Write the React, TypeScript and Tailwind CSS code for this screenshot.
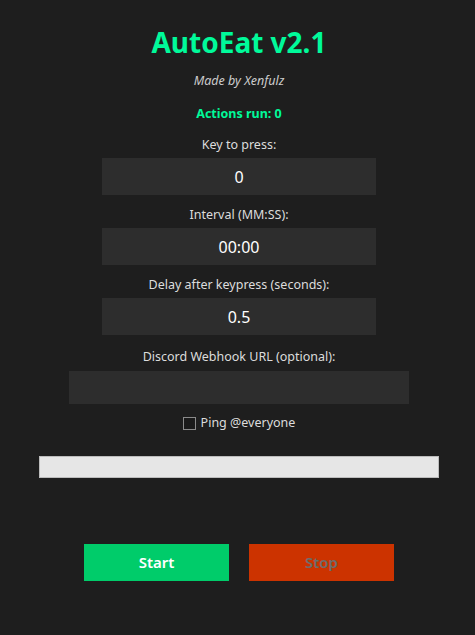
import { useState } from "react";

const fields = [
  { label: "Key to press:", value: "0" },
  { label: "Interval (MM:SS):", value: "00:00" },
  { label: "Delay after keypress (seconds):", value: "0.5" },
];

export default function App() {
  const [values, setValues] = useState(fields.map((f) => f.value));
  const [webhook, setWebhook] = useState("");
  const [ping, setPing] = useState(false);
  const [actions] = useState(0);

  return (
    <div
      className="min-h-screen w-full bg-[#1e1e1e] text-[#dcdcdc] flex flex-col items-center pl-[3px] pt-[24px]"
      style={{ fontFamily: '"Segoe UI", "Noto Sans", sans-serif' }}
    >
      <h1 className="text-[28px] leading-[36px] font-bold text-[#00fa9a]">
        AutoEat v2.1
      </h1>
      <p className="mt-[13px] text-[12.5px] leading-[16px] italic text-[#cccccc]">
        Made by Xenfulz
      </p>
      <p className="mt-[17px] text-[12.5px] leading-[16px] font-bold text-[#00fa9a]">
        Actions run: {actions}
      </p>

      <div className="mt-[3px] flex flex-col items-center">
        {fields.map((field, i) => (
          <div key={field.label} className="flex flex-col items-center mt-3">
            <label className="text-[12.5px] leading-[16px] mb-[5px]">
              {field.label}
            </label>
            <input
              value={values[i]}
              onChange={(e) =>
                setValues((prev) =>
                  prev.map((v, j) => (j === i ? e.target.value : v))
                )
              }
              className="w-[274px] h-[37px] bg-[#2d2d2d] text-white text-center text-[16px] outline-none"
            />
          </div>
        ))}
      </div>

      <label className="mt-[14px] text-[12.5px] leading-[16px] mb-[6px]">
        Discord Webhook URL (optional):
      </label>
      <input
        value={webhook}
        onChange={(e) => setWebhook(e.target.value)}
        className="w-[340px] h-[33px] bg-[#2d2d2d] text-white text-[13px] px-2 outline-none"
      />

      <label className="mt-[11px] flex items-center gap-[5px] text-[12.5px] leading-[16px] cursor-pointer">
        <span
          onClick={() => setPing(!ping)}
          className="w-[13px] h-[13px] border border-[#8a8a8a] bg-[#1a1a1a] flex items-center justify-center"
        >
          {ping && <span className="w-[7px] h-[7px] bg-[#00fa9a]" />}
        </span>
        Ping @everyone
      </label>

      <div className="mt-[25px] w-[400px] h-[22px] bg-[#e6e6e6] border border-[#bcbcbc]" />

      <div className="mt-[66px] flex gap-[20px]">
        <button className="w-[145px] h-[37px] bg-[#00cc6a] text-white text-[15px] font-semibold">
          Start
        </button>
        <button
          disabled
          className="w-[145px] h-[37px] bg-[#cc3300] text-[#6d6d6d] text-[15px] font-semibold"
        >
          Stop
        </button>
      </div>
    </div>
  );
}
